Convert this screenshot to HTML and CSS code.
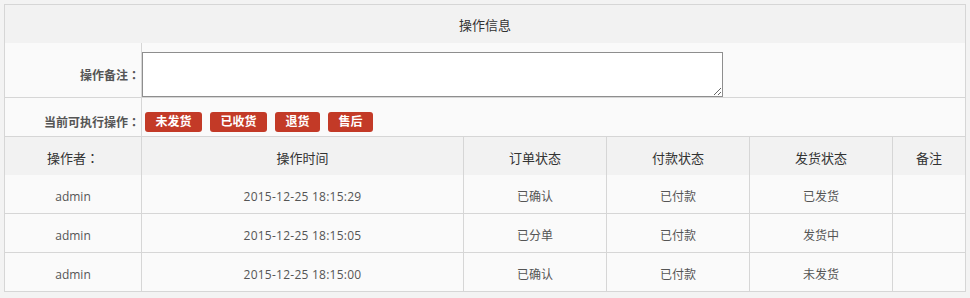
FILE: index.html
```html
<!DOCTYPE html>
<html lang="zh-CN">
<head>
<meta charset="utf-8">
<title>操作信息</title>
<link rel="stylesheet" href="styles.css">
</head>
<body>
<table class="info">
  <colgroup>
    <col class="c1"><col class="c2"><col class="c3"><col class="c4"><col class="c5"><col class="c6">
  </colgroup>
  <tr class="title-row"><th colspan="6">操作信息</th></tr>
  <tr class="form-row">
    <td class="label">操作备注<span class="colon" lang="ja">：</span></td>
    <td class="field" colspan="5"><textarea class="note"></textarea></td>
  </tr>
  <tr class="form-row actions-row">
    <td class="label">当前可执行操作<span class="colon" lang="ja">：</span></td>
    <td class="field" colspan="5">
      <div class="btns">
        <button class="btn">未发货</button>
        <button class="btn">已收货</button>
        <button class="btn">退货</button>
        <button class="btn">售后</button>
      </div>
    </td>
  </tr>
  <tr class="head-row">
    <th>操作者<span class="colon" lang="ja">：</span></th><th>操作时间</th><th>订单状态</th><th>付款状态</th><th>发货状态</th><th>备注</th>
  </tr>
  <tr class="data-row">
    <td>admin</td><td class="time">2015-12-25 18:15:29</td><td>已确认</td><td>已付款</td><td>已发货</td><td></td>
  </tr>
  <tr class="data-row">
    <td>admin</td><td class="time">2015-12-25 18:15:05</td><td>已分单</td><td>已付款</td><td>发货中</td><td></td>
  </tr>
  <tr class="data-row last">
    <td>admin</td><td class="time">2015-12-25 18:15:00</td><td>已确认</td><td>已付款</td><td>未发货</td><td></td>
  </tr>
</table>
</body>
</html>
```

FILE: styles.css
```css
html, body {
  margin: 0;
  padding: 0;
  background: #f3f3f3;
}
body {
  padding: 4px;
  font-family: "Open Sans", "Noto Sans CJK SC", sans-serif;
  font-size: 12px;
  color: #555;
}
.info {
  width: 962px;
  table-layout: fixed;
  border-collapse: separate;
  border-spacing: 0;
  border: 1px solid #d6d6d6;
  background: #fafafa;
}
.c1 { width: 136px; }
.c2 { width: 322px; }
.c3, .c4, .c5 { width: 143px; }
.c6 { width: 73px; }

.info th, .info td {
  box-sizing: border-box;
  padding: 0;
  text-align: center;
  vertical-align: middle;
  font-weight: normal;
}

.colon {
  display: inline-block;
  width: 1em;
  text-align: center;
  font-family: "Noto Sans CJK JP", sans-serif;
}

.title-row th {
  height: 38px;
  background: #f2f2f2;
  font-size: 13px;
  color: #333;
}

.form-row td {
  padding-top: 9px;
  border-bottom: 1px solid #d6d6d6;
}
.form-row { height: 55px; }
.actions-row { height: 39px; }
.form-row .label {
  text-align: right;
  font-weight: bold;
  color: #555;
  padding-right: 1px;
}
.form-row .field {
  text-align: left;
  border-left: 1px solid #d6d6d6;
}
.note {
  display: block;
  box-sizing: border-box;
  width: 581px;
  height: 45px;
  margin: 0;
  border: 1px solid #8e8e8e;
  background: #fff;
}
.btns {
  display: flex;
  gap: 8px;
  padding-left: 3px;
}
.btn {
  height: 20px;
  padding: 0 10.5px;
  border: 0;
  border-radius: 3px;
  background: #c33a27;
  color: #fff;
  font-family: "Open Sans", "Noto Sans CJK SC", sans-serif;
  font-size: 12px;
  font-weight: bold;
  line-height: 20px;
}

.head-row th {
  height: 38px;
  padding-top: 2px;
  background: #f2f2f2;
  font-size: 13px;
  color: #333;
}
.head-row th + th { border-left: 1px solid #d6d6d6; }

.data-row td {
  height: 39px;
  padding-top: 4px;
  border-bottom: 1px solid #d6d6d6;
  color: #555;
}
.data-row.last td {
  height: 38px;
  border-bottom: 0;
}
.data-row td + td { border-left: 1px solid #d6d6d6; }
.data-row .time { letter-spacing: 0.25px; }
```
